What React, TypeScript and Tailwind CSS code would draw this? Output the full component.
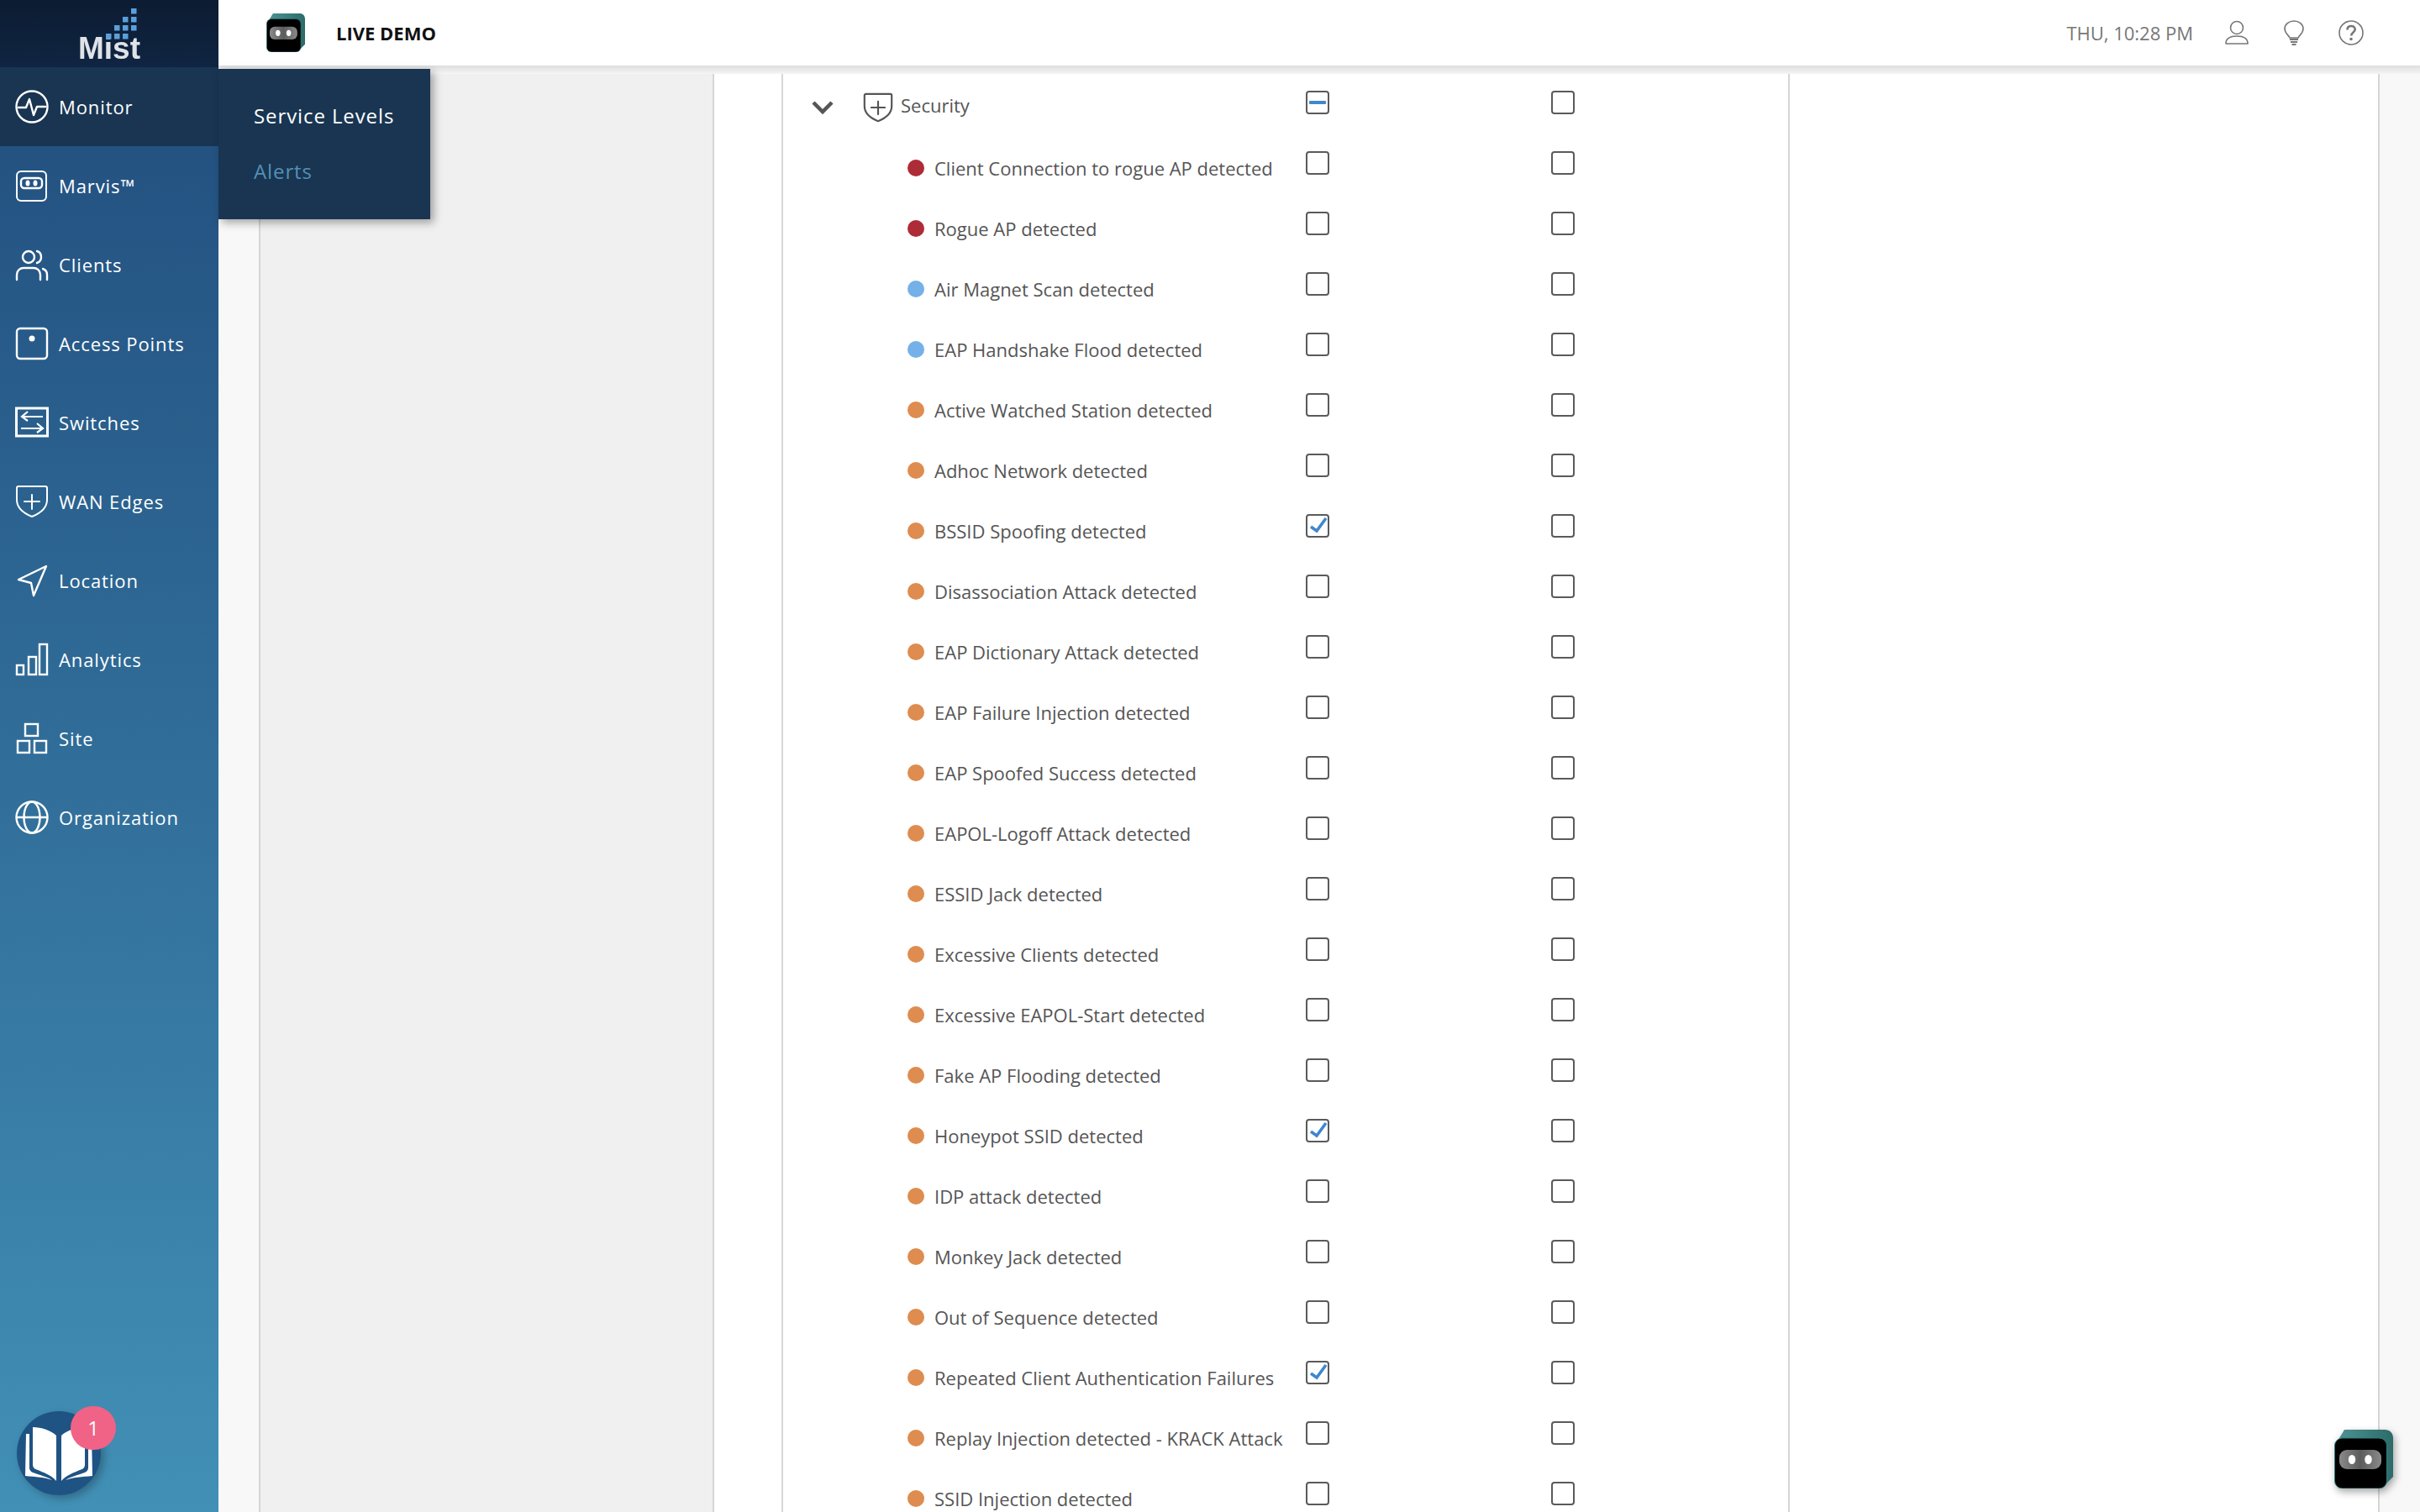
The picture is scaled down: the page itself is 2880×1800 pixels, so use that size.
import React from "react";

const S = { fill: "none", stroke: "currentColor", strokeWidth: 2.4, strokeLinecap: "round", strokeLinejoin: "round" } as const;

const MonitorIcon = () => (
  <svg width="40" height="40" viewBox="0 0 40 40" {...S}>
    <circle cx="20" cy="20" r="18.5" />
    <path d="M4 21h9l4-10 5 19 4-10h10" />
  </svg>
);
const MarvisIcon = () => (
  <svg width="40" height="40" viewBox="0 0 40 40" {...S} strokeWidth={2}>
    <rect x="2" y="3" width="35" height="35" rx="5" />
    <rect x="7" y="11" width="25" height="12" rx="4" strokeWidth={2.4} />
    <ellipse cx="15" cy="17" rx="2.5" ry="3.5" fill="currentColor" stroke="none" />
    <ellipse cx="24" cy="17" rx="2.5" ry="3.5" fill="currentColor" stroke="none" />
  </svg>
);
const ClientsIcon = () => (
  <svg width="40" height="40" viewBox="0 0 40 40" {...S}>
    <circle cx="16" cy="11" r="7" />
    <path d="M2 38v-6c0-5 4-8 8-8h12c4 0 8 3 8 8v6" />
    <path d="M26 4c4 1 5 4 5 7s-2 6-5 7" />
    <path d="M33 25c3 1 5 3 5 7v6" />
  </svg>
);
const ApIcon = () => (
  <svg width="40" height="40" viewBox="0 0 40 40" {...S}>
    <rect x="2" y="2" width="36" height="36" rx="4" />
    <circle cx="20" cy="14" r="3.5" fill="currentColor" stroke="none" />
  </svg>
);
const SwitchIcon = () => (
  <svg width="40" height="40" viewBox="0 0 40 40" {...S} strokeLinecap="butt" strokeLinejoin="miter">
    <rect x="1.5" y="3" width="37" height="33" strokeWidth={3} />
    <path d="M33 13H8M15 7l-7 6 7 5" strokeWidth={2.2} />
    <path d="M7 27h26M26 21l7 6-7 5" strokeWidth={2.2} />
  </svg>
);
const ShieldIcon = ({ w = 40 }: { w?: number }) => (
  <svg width={w} height={w} viewBox="0 0 40 40" {...S} strokeWidth={w === 40 ? 2 : 2.4}>
    <path d="M4 2h32c1 0 2 1 2 2v14c0 10-8 16-18 20C10 34 2 28 2 18V4c0-1 1-2 2-2z" />
    <path d="M20 12v17M11 20h18" />
  </svg>
);
const LocationIcon = () => (
  <svg width="40" height="40" viewBox="0 0 40 40" {...S}>
    <path d="M37 3 4 19l15 4 3 15z" />
  </svg>
);
const AnalyticsIcon = () => (
  <svg width="40" height="40" viewBox="0 0 40 40" {...S} strokeLinecap="butt" strokeLinejoin="miter">
    <rect x="2" y="27" width="8" height="11" />
    <rect x="16" y="17" width="9" height="21" />
    <rect x="29" y="2" width="9" height="36" />
  </svg>
);
const SiteIcon = () => (
  <svg width="40" height="40" viewBox="0 0 40 40" {...S} strokeLinecap="butt" strokeLinejoin="miter">
    <rect x="12" y="3" width="15" height="14" />
    <rect x="3" y="23" width="14" height="14" />
    <rect x="23" y="23" width="14" height="14" />
  </svg>
);
const GlobeIcon = () => (
  <svg width="40" height="40" viewBox="0 0 40 40" {...S}>
    <circle cx="20" cy="20" r="18.5" />
    <ellipse cx="20" cy="20" rx="9.5" ry="18.5" />
    <path d="M2 20h36" />
  </svg>
);

const BotIcon = ({ size }: { size: number }) => (
  <svg width={size} height={size} viewBox="0 0 70 70">
    <defs>
      <linearGradient id={`t${size}`} x1="0" x2="1" y1="0" y2="0">
        <stop offset="0" stopColor="#4c9290" />
        <stop offset="1" stopColor="#2c6b6a" />
      </linearGradient>
      <linearGradient id={`p${size}`} x1="0" x2="1" y1="0" y2="0">
        <stop offset="0" stopColor="#8a8a8a" />
        <stop offset="0.5" stopColor="#5c5c5c" />
        <stop offset="1" stopColor="#8a8a8a" />
      </linearGradient>
    </defs>
    <path d="M12 0h48c6 0 10 4 10 10v46l-8 8H6V10z" fill={`url(#t${size})`} />
    <rect x="0.5" y="10" width="62" height="60" rx="9" fill="#000" stroke="#2f7c80" strokeWidth="1" />
    <rect x="6" y="24" width="50" height="23" rx="9" fill={`url(#p${size})`} />
    <ellipse cx="21" cy="35.5" rx="4.2" ry="5.6" fill="#fff" />
    <ellipse cx="40.5" cy="35.5" rx="4.2" ry="5.6" fill="#fff" />
  </svg>
);

const nav: [string, React.ReactNode][] = [
  ["Marvis™", <MarvisIcon />],
  ["Clients", <ClientsIcon />],
  ["Access Points", <ApIcon />],
  ["Switches", <SwitchIcon />],
  ["WAN Edges", <ShieldIcon />],
  ["Location", <LocationIcon />],
  ["Analytics", <AnalyticsIcon />],
  ["Site", <SiteIcon />],
  ["Organization", <GlobeIcon />],
];

const RED = "bg-[#ae2b38]";
const BLUE = "bg-[#74b1e8]";
const ORG = "bg-[#de8c4f]";

const rows: [string, string, boolean?][] = [
  ["Client Connection to rogue AP detected", RED],
  ["Rogue AP detected", RED],
  ["Air Magnet Scan detected", BLUE],
  ["EAP Handshake Flood detected", BLUE],
  ["Active Watched Station detected", ORG],
  ["Adhoc Network detected", ORG],
  ["BSSID Spoofing detected", ORG, true],
  ["Disassociation Attack detected", ORG],
  ["EAP Dictionary Attack detected", ORG],
  ["EAP Failure Injection detected", ORG],
  ["EAP Spoofed Success detected", ORG],
  ["EAPOL-Logoff Attack detected", ORG],
  ["ESSID Jack detected", ORG],
  ["Excessive Clients detected", ORG],
  ["Excessive EAPOL-Start detected", ORG],
  ["Fake AP Flooding detected", ORG],
  ["Honeypot SSID detected", ORG, true],
  ["IDP attack detected", ORG],
  ["Monkey Jack detected", ORG],
  ["Out of Sequence detected", ORG],
  ["Repeated Client Authentication Failures", ORG, true],
  ["Replay Injection detected - KRACK Attack", ORG],
  ["SSID Injection detected", ORG],
];

const Box = ({ state }: { state?: "check" | "dash" }) => (
  <div className="w-[28px] h-[28px] mb-[12px] shrink-0 rounded-[4px] border-2 border-[#5a5a5a] bg-white flex items-center justify-center">
    {state === "check" && (
      <svg width="24" height="24" viewBox="0 0 24 24" fill="none" stroke="#3f87cf" strokeWidth="3.6">
        <path d="M4 13l7 5L22 3" />
      </svg>
    )}
    {state === "dash" && <div className="w-[20px] h-[4px] rounded-[1px] bg-[#3f87cf]" />}
  </div>
);

const Row = ({ children, state }: { children: React.ReactNode; state?: "check" | "dash" }) => (
  <div className="flex items-center h-[72px] shrink-0">
    <div className="w-[622px] flex items-center shrink-0">{children}</div>
    <Box state={state} />
    <div className="w-[264px] shrink-0" />
    <Box />
  </div>
);

const Dots = () => {
  const cells = [
    [159, 13], [149, 23], [159, 23], [139, 33], [149, 33], [159, 33], [129, 43], [139, 43], [149, 43],
  ];
  return (
    <svg className="absolute left-0 top-0" width="260" height="80">
      {cells.map(([x, y]) => (
        <rect key={`${x}-${y}`} x={x - 3} y={y - 3} width="6.5" height="6.5" fill="#5a9fdb" />
      ))}
    </svg>
  );
};

export default function App() {
  return (
    <div className="relative w-[2880px] h-[1800px] overflow-hidden flex bg-white font-['Open_Sans',sans-serif]">
      <aside className="w-[260px] shrink-0 flex flex-col bg-linear-to-b from-[#214c7c] to-[#4290b6] text-white">
        <div className="relative h-[80px] shrink-0 flex items-end justify-center pb-[4px] bg-linear-to-b from-[#0c1c32] to-[#102542]">
          <span className="font-['Liberation_Sans',sans-serif] font-bold text-[37px] leading-[37px] text-[#dfe3e8] blur-[0.6px]">Mist</span>
          <Dots />
        </div>
        <div className="h-[94px] shrink-0 flex items-center pl-[18px] gap-[12px] bg-[#193552]">
          <MonitorIcon />
          <span className="text-[22px] tracking-[0.9px]">Monitor</span>
        </div>
        {nav.map(([label, icon]) => (
          <div key={label} className="h-[94px] shrink-0 flex items-center pl-[18px] gap-[12px]">
            {icon}
            <span className="text-[22px] tracking-[0.9px]">{label}</span>
          </div>
        ))}
      </aside>

      <main className="flex-1 min-w-0 flex flex-col">
        <header className="h-[78px] shrink-0 flex items-center bg-white pl-[57px] pr-[67px]">
          <BotIcon size={46} />
          <span className="ml-[37px] text-[22px] font-bold text-[#111]">LIVE DEMO</span>
          <div className="flex items-center ml-auto text-[#777]">
            <span className="text-[22px] text-[#777] mr-[37px]">THU, 10:28 PM</span>
            <svg width="30" height="30" viewBox="0 0 30 30" fill="none" stroke="#777" strokeWidth="1.6">
              <circle cx="15" cy="9" r="7.5" />
              <path d="M2 28c0-6 5-9 13-9s13 3 13 9z" strokeLinejoin="round" />
            </svg>
            <svg className="ml-[38px]" width="30" height="30" viewBox="0 0 30 30" fill="none" stroke="#777" strokeWidth="1.6">
              <path d="M10 21c-1-3-6-5-6-11C4 5 9 1 15 1s11 4 11 9c0 6-5 8-6 11z" />
              <path d="M10 23h10M11 26h8M12.5 29h5" strokeWidth="2" />
            </svg>
            <svg className="ml-[38px]" width="30" height="30" viewBox="0 0 30 30" fill="none" stroke="#777" strokeWidth="1.6">
              <circle cx="15" cy="15" r="14" />
              <path d="M10.5 11.5c0-3 2-4.5 4.7-4.5s4.5 1.7 4.5 4c0 3.5-4.5 3.5-4.5 7.5" strokeWidth="2.6" />
              <circle cx="15" cy="22.5" r="1.8" fill="#777" stroke="none" />
            </svg>
          </div>
        </header>
        <div className="h-[10px] shrink-0 bg-linear-to-b from-[#dedede] to-[#f5f5f5]" />

        <div className="flex-1 min-h-0 flex">
          <div className="w-[50px] shrink-0 bg-[#f8f8f8] border-r-2 border-[#d6d6d6]" />
          <div className="w-[540px] shrink-0 bg-[#f0f0f0] border-r-2 border-[#d6d6d6]" />
          <div className="w-[82px] shrink-0 bg-white border-r-2 border-[#d6d6d6]" />
          <div className="w-[1198px] shrink-0 bg-white border-r-2 border-[#d6d6d6] overflow-hidden flex flex-col pt-[4px] text-[#555]">
            <Row state="dash">
              <svg className="ml-[33px]" width="28" height="20" viewBox="0 0 28 20" fill="none" stroke="#555" strokeWidth="4.5">
                <path d="M3 4l11 11 11-11" />
              </svg>
              <span className="ml-[34px] text-[#555]"><ShieldIcon w={36} /></span>
              <span className="ml-[9px] mb-[6px] text-[22px]">Security</span>
            </Row>
            {rows.map(([label, color, checked]) => (
              <Row key={label} state={checked ? "check" : undefined}>
                <span className={`ml-[148px] w-[20px] h-[20px] rounded-full shrink-0 ${color}`} />
                <span className="ml-[12px] text-[22px] whitespace-nowrap">{label}</span>
              </Row>
            ))}
          </div>
          <div className="w-[702px] shrink-0 bg-white border-r-2 border-[#d6d6d6]" />
          <div className="flex-1 bg-[#f8f8f8]" />
        </div>
      </main>

      <div className="absolute left-[260px] top-[82px] w-[252px] h-[179px] bg-[#193552] shadow-[4px_4px_10px_rgba(0,0,0,0.35)] pl-[42px] pt-[39px] flex flex-col gap-[33px]">
        <span className="text-[24px] leading-[33px] tracking-[0.9px] text-white">Service Levels</span>
        <span className="text-[24px] leading-[33px] tracking-[0.9px] text-[#5590b4]">Alerts</span>
      </div>

      <div className="absolute left-[20px] top-[1680px] w-[100px] h-[100px] rounded-full bg-[#1f5384] shadow-[4px_4px_10px_rgba(0,0,0,0.25)] flex items-center justify-center">
        <svg width="80" height="66" viewBox="0 0 80 66" fill="#fff">
          <path d="M9 2c10 0 22 4 28 10v54c-7-8-16-10-22-13-4-1-6-3-6-7z" />
          <path d="M71 2c-10 0-22 4-28 10v54c7-8 16-10 22-13 4-1 6-3 6-7z" />
          <path d="M1 10h4v40c0 4 3 6 7 7 5 2 14 4 20 8-8-3-20-4-32-5z" />
          <path d="M79 10h-4v40c0 4-3 6-7 7-5 2-14 4-20 8 8-3 20-4 32-5z" />
        </svg>
      </div>
      <div className="absolute left-[84px] top-[1674px] w-[54px] h-[52px] rounded-full bg-[#f06386] flex items-center justify-center text-white text-[24px]">1</div>

      <div className="absolute left-[2778px] top-[1702px] drop-shadow-[2px_4px_5px_rgba(0,0,0,0.35)]">
        <BotIcon size={70} />
      </div>
    </div>
  );
}
